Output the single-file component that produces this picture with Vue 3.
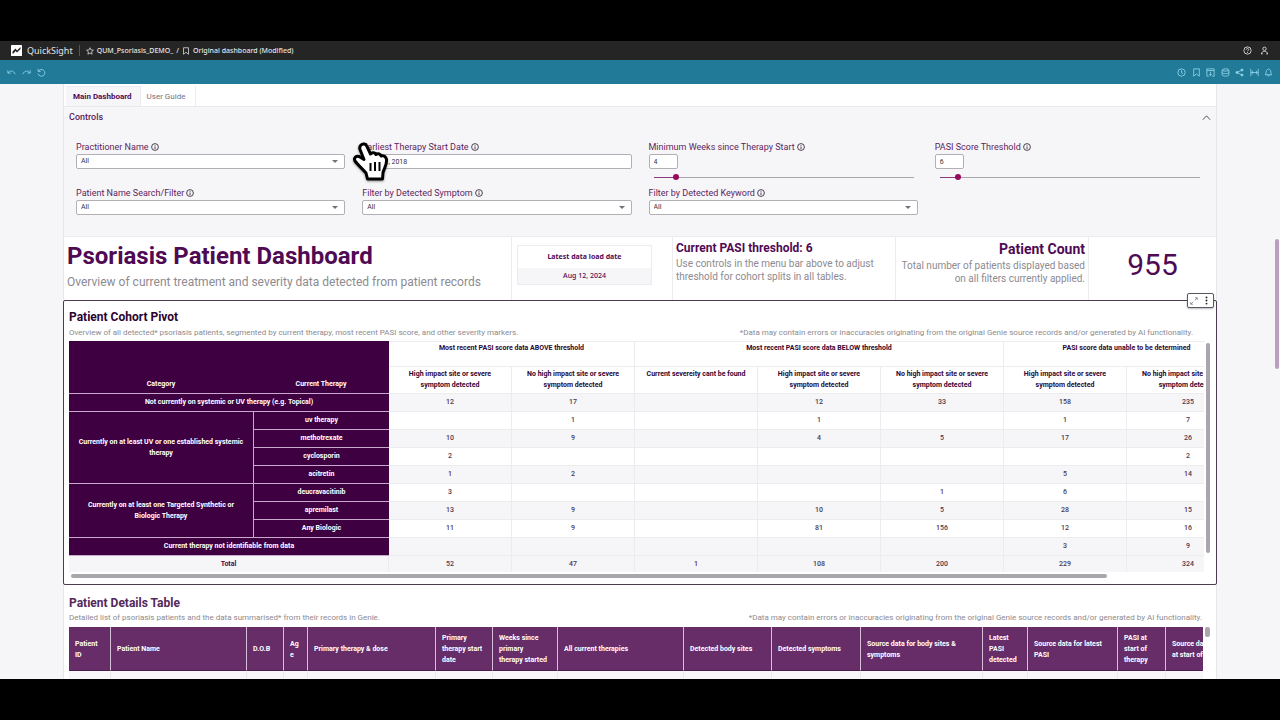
<script setup>
import { ref } from 'vue'

const practitioner = ref('All')
const patient = ref('All')
const symptom = ref('All')
const keyword = ref('All')
const startDate = ref('Jan 01, 2018')
const weeks = ref(4)
const threshold = ref(6)

const pct = (v, max) => (v / max) * 100 + '%'

const HIGH = 'High impact site or severe symptom detected'
const NONE = 'No high impact site or severe symptom detected'
const groups = [
  { label: 'Most recent PASI score data ABOVE threshold', span: 2 },
  { label: 'Most recent PASI score data BELOW threshold', span: 3 },
  { label: 'PASI score data unable to be determined', span: 2 },
]
const measures = [HIGH, NONE, 'Current severeity cant be found', HIGH, NONE, HIGH, NONE]

const rows = [
  { cat: 'Not currently on systemic or UV therapy (e.g. Topical)', wide: true, v: [12, 17, '', 12, 33, 158, 235] },
  { cat: 'Currently on at least UV or one established systemic therapy', span: 4, therapy: 'uv therapy', v: ['', 1, '', 1, '', 1, 7] },
  { therapy: 'methotrexate', v: [10, 9, '', 4, 5, 17, 26] },
  { therapy: 'cyclosporin', v: [2, '', '', '', '', '', 2] },
  { therapy: 'acitretin', v: [1, 2, '', '', '', 5, 14] },
  { cat: 'Currently on at least one Targeted Synthetic or Biologic Therapy', span: 3, therapy: 'deucravacitinib', v: [3, '', '', '', 1, 6, ''] },
  { therapy: 'apremilast', v: [13, 9, '', 10, 5, 28, 15] },
  { therapy: 'Any Biologic', v: [11, 9, '', 81, 156, 12, 16] },
  { cat: 'Current therapy not identifiable from data', wide: true, v: ['', '', '', '', '', 3, 9] },
]
const totals = [52, 47, 1, 108, 200, 229, 324]

const details = [
  ['Patient ID', 42], ['Patient Name', 136], ['D.O.B', 37], ['Age', 24],
  ['Primary therapy & dose', 128], ['Primary therapy start date', 57],
  ['Weeks since\nprimary\ntherapy started', 65], ['All current therapies', 126],
  ['Detected body sites', 88], ['Detected symptoms', 89],
  ['Source data for body sites & symptoms', 122], ['Latest PASI detected', 45],
  ['Source data for latest PASI', 90], ['PASI at start of therapy', 48],
  ['Source data\nat start of therapy', 84],
]
</script>

<template>
  <div class="stage">
    <div class="app">
      <header class="topbar">
        <svg class="logo" viewBox="0 0 22 22" aria-hidden="true">
          <rect width="22" height="22" rx="1" fill="#fff" />
          <path d="M3 17v-4l6-6 3 4 7-7v4l-7 7-3-3-4 5z" fill="#252525" />
        </svg>
        <span class="brand">QuickSight</span>
        <span class="bar"></span>
        <nav class="crumbs" aria-label="Breadcrumb">
          <svg viewBox="0 0 16 16"><path d="M8 1.500l2 4.400 4.800.5-3.600 3.200 1 4.800L8 12l-4.200 2.400 1-4.800L1.200 6.400 6 5.900z" /></svg>
          <a href="#">QUM_Psoriasis_DEMO_</a>
          <span>/</span>
          <svg viewBox="0 0 16 16"><path d="M3 1.500h10v13L8 10.500l-5 4z" /></svg>
          <a href="#">Original dashboard (Modified)</a>
        </nav>
        <div class="account">
          <button aria-label="Help"><svg viewBox="0 0 16 16"><circle cx="8" cy="8" r="6.500" /><path d="M5.800 6.500c0-3 4.600-2.800 4.400 0C10.100 8 8 8 8 9.500M8 11v1.500" /></svg></button>
          <button aria-label="Account"><svg viewBox="0 0 16 16"><circle cx="8" cy="5" r="3" /><path d="M2.500 14c.5-6 10.500-6 11 0M2 14h3M11 14h3" /></svg></button>
        </div>
      </header>

      <div class="toolbar">
        <div class="tools left">
          <button aria-label="Undo"><svg viewBox="0 0 16 16"><path d="M1.500 4v5h5M2 9c3-5 10-5 12.500 2" /></svg></button>
          <button aria-label="Redo"><svg viewBox="0 0 16 16"><path d="M14.500 4v5h-5M14 9c-3-5-10-5-12.500 2" /></svg></button>
          <button aria-label="Reset"><svg viewBox="0 0 16 16"><path d="M2 1.500V6h4.500M2.500 6a6 6 0 1 1-.5 4" /></svg></button>
        </div>
        <div class="tools right">
          <button aria-label="Schedule"><svg viewBox="0 0 16 16"><circle cx="8" cy="8" r="6.500" /><path d="M8 4v4.500l3 1.500" /></svg></button>
          <button aria-label="Bookmarks"><svg viewBox="0 0 16 16"><path d="M3 1.500h10v13L8 10.500l-5 4z" /></svg></button>
          <button aria-label="Export"><svg viewBox="0 0 16 16"><path d="M5 14.500H1.500v-13h13v13H11M1.500 4.500h13M8 6.500v7M5.500 11L8 13.500l2.500-2.500" /></svg></button>
          <button aria-label="Data"><svg viewBox="0 0 16 16"><ellipse cx="8" cy="3.500" rx="6" ry="2" /><path d="M2 3.500v9c0 2.700 12 2.700 12 0v-9M2 8c0 2.700 12 2.700 12 0" /></svg></button>
          <button aria-label="Share"><svg viewBox="0 0 16 16"><path d="M12.500 3.500L3.500 8l9 4.500" /><circle cx="12.500" cy="3.500" r="1.800" fill="#8fd6e8" /><circle cx="3.500" cy="8" r="1.800" fill="#8fd6e8" /><circle cx="12.500" cy="12.500" r="1.800" fill="#8fd6e8" /></svg></button>
          <button aria-label="Fit width"><svg viewBox="0 0 16 16"><path d="M1.500 1.500v13M14.500 1.500v13M2 8h12M5.500 5L2.500 8l3 3M10.500 5l3 3-3 3" /></svg></button>
          <button aria-label="Alerts"><svg viewBox="0 0 16 16"><path d="M2 12c2-2 1.500-4 2-6.500 1-4.500 7-4.500 8 0 .5 2.500 0 4.500 2 6.500zM6.500 12c0 3 3 3 3 0" /></svg></button>
        </div>
      </div>

      <div class="canvas">
        <main class="sheet">
          <nav class="tabs" aria-label="Sheets">
            <button class="tab active">Main Dashboard</button>
            <button class="tab">User Guide</button>
          </nav>

          <section class="controls">
            <div class="controls-head">
              <h2>Controls</h2>
              <button aria-label="Collapse controls"><svg viewBox="0 0 16 16"><path d="M1.500 12L8 5l6.500 7" /></svg></button>
            </div>
            <div class="fields">
              <div class="field">
                <label for="prac">Practitioner Name<svg class="info" viewBox="0 0 16 16"><circle cx="8" cy="8" r="6.800" /><path d="M8 7v5M8 4v1.500" /></svg></label>
                <select id="prac" v-model="practitioner"><option>All</option></select>
              </div>
              <div class="field">
                <label for="date">Earliest Therapy Start Date<svg class="info" viewBox="0 0 16 16"><circle cx="8" cy="8" r="6.800" /><path d="M8 7v5M8 4v1.500" /></svg></label>
                <input id="date" v-model="startDate" type="text" />
                <svg class="pointer" viewBox="0 0 36 42" aria-hidden="true">
                  <path d="M8 4c2-2 5-1 6 1.500L17.500 13c1.500-2 4.500-1.500 5.500.5 2-1.500 4.500-.5 5 1.500 2.500-1 5 .5 5.500 3.500.5 5-2 8-3.500 13l-.5 6.500H14.500L13 32c-3-3.500-8-8-11-12-1.500-3 1-5.500 4-4.500l5 3-4-10C6.500 7 6.500 5.500 8 4z" />
                  <path class="lines" d="M17.500 22v8M22 21v9M26.500 21v9" />
                </svg>
              </div>
              <div class="field">
                <label for="weeks">Minimum Weeks since Therapy Start<svg class="info" viewBox="0 0 16 16"><circle cx="8" cy="8" r="6.800" /><path d="M8 7v5M8 4v1.500" /></svg></label>
                <input id="weeks" v-model="weeks" class="num" type="text" />
                <input v-model="weeks" aria-label="Minimum weeks slider" type="range" min="0" max="52" :style="{ '--fill': pct(weeks, 52) }" />
              </div>
              <div class="field">
                <label for="pasi">PASI Score Threshold<svg class="info" viewBox="0 0 16 16"><circle cx="8" cy="8" r="6.800" /><path d="M8 7v5M8 4v1.500" /></svg></label>
                <input id="pasi" v-model="threshold" class="num" type="text" />
                <input v-model="threshold" aria-label="PASI threshold slider" type="range" min="0" max="100" :style="{ '--fill': pct(threshold, 100) }" />
              </div>
              <div class="field">
                <label for="pat">Patient Name Search/Filter<svg class="info" viewBox="0 0 16 16"><circle cx="8" cy="8" r="6.800" /><path d="M8 7v5M8 4v1.500" /></svg></label>
                <select id="pat" v-model="patient"><option>All</option></select>
              </div>
              <div class="field">
                <label for="sym">Filter by Detected Symptom<svg class="info" viewBox="0 0 16 16"><circle cx="8" cy="8" r="6.800" /><path d="M8 7v5M8 4v1.500" /></svg></label>
                <select id="sym" v-model="symptom"><option>All</option></select>
              </div>
              <div class="field">
                <label for="key">Filter by Detected Keyword<svg class="info" viewBox="0 0 16 16"><circle cx="8" cy="8" r="6.800" /><path d="M8 7v5M8 4v1.500" /></svg></label>
                <select id="key" v-model="keyword"><option>All</option></select>
              </div>
            </div>
          </section>

          <section class="summary">
            <div class="cell title">
              <h1>Psoriasis Patient Dashboard</h1>
              <p>Overview of current treatment and severity data detected from patient records</p>
            </div>
            <div class="cell load">
              <dl>
                <dt>Latest data load date</dt>
                <dd>Aug 12, 2024</dd>
              </dl>
            </div>
            <div class="cell current">
              <h3>Current PASI threshold: 6</h3>
              <p>Use controls in the menu bar above to adjust threshold for cohort splits in all tables.</p>
            </div>
            <div class="cell count">
              <h3>Patient Count</h3>
              <p>Total number of patients displayed based on all filters currently applied.</p>
            </div>
            <div class="cell big">955</div>
          </section>

          <section class="pivot">
            <div class="float-menu">
              <button aria-label="Maximize"><svg viewBox="0 0 16 16"><path d="M10 1.500h4.500V6M14 2L9.500 6.500M6 14.500H1.500V10M2 14l4.500-4.500" /></svg></button>
              <button aria-label="Menu options"><svg class="dots" viewBox="0 0 16 16"><circle cx="8" cy="2.500" r="1.700" /><circle cx="8" cy="8" r="1.700" /><circle cx="8" cy="13.500" r="1.700" /></svg></button>
            </div>
            <h2>Patient Cohort Pivot</h2>
            <div class="notes">
              <p>Overview of all detected* psoriasis patients, segmented by current therapy, most recent PASI score, and other severity markers.</p>
              <p>*Data may contain errors or inaccuracies originating from the original Genie source records and/or generated by AI functionality.</p>
            </div>
            <div class="scroller">
              <div class="view">
                <table class="pivot-table">
                  <colgroup>
                    <col class="c-cat" /><col class="c-ther" />
                    <col v-for="n in 7" :key="n" class="c-num" />
                  </colgroup>
                  <thead>
                    <tr class="groups">
                      <th rowspan="2" class="dark corner">Category</th>
                      <th rowspan="2" class="dark corner">Current Therapy</th>
                      <th v-for="g in groups" :key="g.label" :colspan="g.span">{{ g.label }}</th>
                    </tr>
                    <tr class="measures">
                      <th v-for="(m, i) in measures" :key="i">{{ m }}</th>
                    </tr>
                  </thead>
                  <tbody>
                    <tr v-for="(r, i) in rows" :key="i" :class="{ odd: i % 2 === 0 }">
                      <th v-if="r.cat" class="dark" :colspan="r.wide ? 2 : 1" :rowspan="r.span || 1">{{ r.cat }}</th>
                      <th v-if="r.therapy" class="dark split">{{ r.therapy }}</th>
                      <td v-for="(v, j) in r.v" :key="j">{{ v }}</td>
                    </tr>
                  </tbody>
                  <tfoot>
                    <tr class="odd">
                      <th colspan="2">Total</th>
                      <td v-for="(v, j) in totals" :key="j">{{ v }}</td>
                    </tr>
                  </tfoot>
                </table>
              </div>
              <div class="vbar"><span></span></div>
            </div>
            <div class="hbar"><span></span></div>
          </section>

          <section class="details">
            <h2>Patient Details Table</h2>
            <div class="notes">
              <p>Detailed list of psoriasis patients and the data summarised* from their records in Genie.</p>
              <p>*Data may contain errors or inaccuracies originating from the original Genie source records and/or generated by AI functionality.</p>
            </div>
            <div class="scroller">
              <div class="view">
                <table class="details-table">
                  <colgroup>
                    <col v-for="d in details" :key="d[0]" :style="{ width: d[1] + 'px' }" />
                  </colgroup>
                  <thead>
                    <tr><th v-for="d in details" :key="d[0]">{{ d[0] }}</th></tr>
                  </thead>
                  <tbody>
                    <tr><td v-for="d in details" :key="d[0]"></td></tr>
                  </tbody>
                </table>
              </div>
              <div class="vbar short"><span></span></div>
            </div>
          </section>
        </main>
        <div class="page-bar"></div>
      </div>
    </div>
  </div>
</template>

<style>
body { background: #000; }
</style>

<style scoped>
* { box-sizing: border-box; }
h1, h2, h3, p, dl, dd, dt { margin: 0; }
button { border: 0; padding: 0; background: none; font: inherit; color: inherit; display: flex; align-items: center; }
svg { display: block; fill: none; stroke: currentColor; stroke-width: 1.5; flex: none; }

.stage { height: 100vh; padding: 41px 0; background: #000; }
.app {
  height: 100%; display: flex; flex-direction: column; overflow: hidden;
  background: #f6f6f8; font-family: Roboto, "Liberation Sans", sans-serif; color: #4f0a54;
}

.topbar {
  flex: none; height: 19px; display: flex; align-items: center; padding: 0 11px;
  background: #252525; color: #e4e4e4; font-family: "Noto Sans", sans-serif;
}
.logo { width: 11px; height: 11px; stroke: none; }
.brand { margin-left: 5px; font-size: 9px; line-height: 12px; }
.bar { width: 1px; height: 11px; margin: 0 6px; background: #555; }
.crumbs { display: flex; align-items: center; gap: 3px; font-size: 7px; line-height: 10px; font-weight: 500; }
.crumbs a { color: inherit; text-decoration: none; }
.crumbs svg { width: 8px; height: 8px; }
.account { margin-left: auto; display: flex; gap: 8px; }
.account svg { width: 9px; height: 9px; }

.toolbar {
  flex: none; height: 24px; display: flex; justify-content: space-between; align-items: center;
  padding: 0 7px; background: #217a98; color: #8fd6e8;
}
.tools { display: flex; gap: 6px; }
.tools.right { width: 96px; gap: 0; justify-content: space-between; }
.tools svg { width: 9px; height: 9px; }

.canvas { flex: 1; min-height: 0; position: relative; padding: 0 63px; }
.page-bar { position: absolute; right: 1px; top: 155px; width: 4px; height: 130px; border-radius: 2px; background: #b9a0bd; }
.sheet {
  height: 100%; overflow: hidden; padding: 0 1px; background: #fff;
  box-shadow: inset 1px 0 #e6e6ea, inset -1px 0 #e6e6ea;
}

.tabs { height: 23px; display: flex; padding: 2px 2px 0; border-bottom: 1px solid #e9e9ec; }
.tab { padding: 2px 10px 0 6px; font-size: 8px; line-height: 12px; color: #77707a; border-right: 1px solid #ececf0; }
.tab.active { padding: 1px 8px 0 7px; background: #f6f6f8; border: solid #ececf0; border-width: 1px 1px 0 0; font-weight: 700; color: #4f0a54; }

.controls { background: #f6f6f8; padding: 4px 12px 21px; border-bottom: 1px solid #ececef; }
.controls-head { display: flex; justify-content: space-between; align-items: center; margin: 0 -7px 17px; height: 13px; }
.controls-head h2 { font-size: 9px; line-height: 13px; font-weight: 500; color: #5a2360; }
.controls-head svg { width: 9px; height: 9px; color: #3f3344; }
.fields { display: grid; grid-template-columns: repeat(4, minmax(0, 1fr)); column-gap: 17px; row-gap: 4px; }
.field { position: relative; }
label { display: flex; align-items: center; gap: 2px; height: 12px; margin-bottom: 1px; font-size: 9px; line-height: 12px; color: #5d2562; }
.info { width: 8px; height: 8px; color: #3b2a40; stroke-width: 1.8; }
select, input[type='text'] {
  display: block; width: 100%; height: 15px; padding: 0 4px; border: 1px solid #b3b0b5; border-radius: 2px;
  background: #fff; color: #3b3040; font-family: inherit; font-size: 7px; line-height: 13px; outline: none; margin: 0;
}
select {
  appearance: none;
  background-image: url("data:image/svg+xml,%3Csvg xmlns='http://www.w3.org/2000/svg' viewBox='0 0 6 3'%3E%3Cpath d='M0 0h6L3 3z' fill='%2377707a'/%3E%3C/svg%3E");
  background-repeat: no-repeat; background-size: 6px 3px; background-position: right 6px center;
}
input.num { width: 29px; }
input[type='range'] {
  appearance: none; display: block; width: calc(100% - 9px); height: 9px; margin: 4px 4px 1px 5px; background: transparent;
}
input[type='range']::-webkit-slider-runnable-track {
  height: 1px; background: linear-gradient(to right, #8a3a80 var(--fill), #aaa5ad 0);
}
input[type='range']::-webkit-slider-thumb {
  appearance: none; width: 6px; height: 6px; margin-top: -3px; border-radius: 50%; background: #97095c;
}
.pointer {
  position: absolute; left: -9px; top: 0; width: 36px; height: 42px; z-index: 2;
  fill: #fff; stroke: #000; stroke-width: 3; stroke-linejoin: round; filter: drop-shadow(0 1px 1px #0006);
}
.lines { stroke-width: 2; }

.summary { display: grid; grid-template-columns: 448fr 161fr 223fr 193fr 127fr; height: 63px; }
.cell { min-width: 0; border-right: 1px solid #ececf0; padding: 3px 3px; }
.cell:last-child { border-right: 0; }
.cell p { color: #8d8a90; font-size: 10px; line-height: 13px; }
.cell.title { padding: 4px 3px; white-space: nowrap; }
.cell.title h1 { font-size: 24px; line-height: 31px; }
.cell.title p { font-size: 12px; line-height: 20px; }
.cell.load { padding: 8px 20px 0 5px; }
.load dl { border: 1px solid #ececf0; text-align: center; font-family: "Noto Sans", sans-serif; font-size: 7px; }
.load dt { line-height: 22px; font-weight: 700; }
.load dd { line-height: 16px; background: #f6f5f8; font-weight: 500; }
h3 { font-size: 12px; line-height: 17px; }
.count { text-align: right; }
.count h3 { font-size: 14px; line-height: 19px; }
.big { display: flex; align-items: center; justify-content: center; font-size: 30px; line-height: 34px; padding: 0 3px 7px; }

.pivot { position: relative; margin: 0 -1px; border: 1px solid #4b3a50; border-radius: 2px; padding: 9px 6px 6px 5px; }
h2 { font-size: 12px; line-height: 15px; }
.pivot h2 { color: #2c0430; }
.notes { display: flex; justify-content: space-between; white-space: nowrap; color: #8d8a90; font-size: 8px; line-height: 12px; padding: 2px 0; }
.pivot .notes { padding-right: 17px; }
.float-menu {
  position: absolute; right: 2px; top: -8px; width: 27px; height: 15px; display: flex; align-items: center; justify-content: space-around;
  background: #fff; border: 1px solid #5d5561; border-radius: 2px; box-shadow: 0 1px 2px #0004; color: #5d5561;
}
.float-menu svg { width: 8px; height: 8px; stroke-width: 1.2; }
.float-menu .dots { width: 9px; height: 9px; fill: #222; stroke: none; }

.scroller { display: flex; gap: 2px; }
.view { flex: 1; min-width: 0; overflow: hidden; }
.vbar { flex: none; width: 4px; }
.vbar span { display: block; height: 210px; margin-top: 2px; border-radius: 2px; background: #aba6ae; }
.vbar.short { width: 5px; margin-right: 6px; }
.vbar.short span { height: 10px; margin-top: 0; }
.hbar { padding: 2px 0 0 2px; }
.hbar span { display: block; width: 91%; height: 4px; border-radius: 2px; background: #a9a7ab; }

table { table-layout: fixed; border-collapse: separate; border-spacing: 0; font-size: 7px; line-height: 11px; }
.pivot-table { width: 1181px; }
.c-cat { width: 184px; }
.c-ther { width: 136px; }
.c-num { width: 123px; }
.pivot-table th, .pivot-table td { padding: 0 8px; text-align: center; border: solid #ececee; border-width: 0 1px 1px 0; height: 18px; }
.pivot-table td { color: #4d3a52; font-weight: 500; }
.pivot-table thead th { vertical-align: top; color: #2f0534; }
.pivot-table .groups th { height: 26px; padding-top: 1px; border-top: 1px solid #ececee; }
.pivot-table .measures th { height: 26px; padding: 2px 12px; }
.pivot-table .measures th:nth-child(3) { padding: 2px 0; }
.pivot-table thead .dark, .pivot-table .dark { background: #3e0041; color: #fff; border-color: #c9a9cc; border-width: 0 0 1px; }
.pivot-table .split { border-left-width: 1px; }
.pivot-table .groups .corner { vertical-align: bottom; padding-bottom: 3px; border-top: 0; }
.pivot-table .odd td, .pivot-table tfoot th { background: #f6f5f8; }
.pivot-table tfoot th, .pivot-table tfoot td { border-bottom: 0; height: 16px; }

.details { padding: 11px 0 0 5px; }
.details h2 { color: #55285a; }
.details .notes { padding: 1px 14px 3px 0; }
.details-table { width: 1181px; }
.details-table th {
  height: 44px; padding: 2px 5px 0 6px; text-align: left; color: #fff; background: #672d69; white-space: pre-line;
  border-right: 1px solid #d6bfd8; border-bottom: 1px solid #4a1c4d; overflow-wrap: anywhere;
}
.details-table td { height: 18px; background: #f8f6f9; border-right: 1px solid #f0e6f0; }
</style>
